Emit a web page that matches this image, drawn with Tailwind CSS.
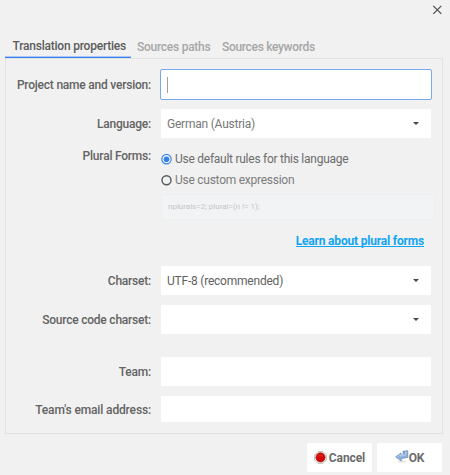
<!DOCTYPE html>
<html lang="en">
<head>
<meta charset="utf-8">
<title>Translation properties</title>
<script src="https://cdn.jsdelivr.net/npm/@tailwindcss/browser@4"></script>
</head>
<body class="w-[450px] h-[475px] overflow-hidden bg-[#f1f1f1] font-['Roboto',sans-serif] text-[12px] tracking-[-0.22px] leading-4 text-[#636363]">
<div class="flex flex-col h-[475px] pl-[5px] pr-[8px]">
  <header class="flex justify-end h-[37px] pt-[5px]">
    <button class="size-[10px]" aria-label="Close"><svg class="block" width="10" height="10" viewBox="0 0 10 10" fill="none" stroke="#4c4c4c" stroke-width="1.2"><path d="M1.3 .8l8 8M9.3 .8l-8 8"/></svg></button>
  </header>
  <nav class="relative z-10 flex h-[21px] font-medium whitespace-nowrap">
    <div class="w-[126px] h-[21px] pl-[7.5px] pt-px border-b border-[#3a80f2] shadow-[inset_0_-1px_0_#a9c7f6] text-[#5b5b5b]">Translation properties</div>
    <div class="w-[85px] pl-[6px] pt-[2px] text-[#a6a6a6] tracking-[-0.26px]">Sources paths</div>
    <div class="pl-[6px] pt-[2px] text-[#a6a6a6] tracking-[-0.32px]">Sources keywords</div>
  </nav>
  <main class="flex flex-col w-[438px] h-[376px] border border-[#e2e2e2] pt-[10px] pr-[10px]">
    <div class="flex items-center h-[31px]">
      <label class="w-[145px] font-medium text-right">Project name and version:</label>
      <div class="flex items-center ml-[9px] w-[272px] h-[31px] rounded-[2px] border border-[#7ba7f2] bg-white pl-[6px]"><span class="w-px h-4 bg-[#a0a0a0]"></span></div>
    </div>
    <div class="flex items-center h-[29px] mt-[9px]">
      <label class="w-[145px] font-medium text-right">Language:</label>
      <div class="flex items-center justify-between ml-[10px] w-[270px] h-[29px] rounded-[1px] bg-white pl-[6px] pr-[12px] text-[#777]">German (Austria)<svg width="6" height="3" viewBox="0 0 6 3" fill="#3f474d"><path d="M0 0h6L3 3z"/></svg></div>
    </div>
    <div class="flex mt-[9px] h-[48px]">
      <label class="w-[145px] pt-px font-medium text-right">Plural Forms:</label>
      <div class="ml-[10px] pt-[4px] text-[#6d6d6d] tracking-[-0.26px]">
        <div class="flex items-center h-4"><svg width="11" height="11" viewBox="0 0 11 11"><circle cx="5.5" cy="5.2" r="4.7" fill="#f5f8fe" stroke="#3481ee" stroke-width="1.2"/><circle cx="5.5" cy="5.2" r="2.8" fill="#3481ee"/></svg><span class="ml-[3px]">Use default rules for this language</span></div>
        <div class="flex items-center h-4 mt-[5px] text-[#7c7c7c]"><svg width="11" height="11" viewBox="0 0 11 11"><circle cx="5.5" cy="5.2" r="4.5" fill="none" stroke="#535a5f" stroke-width="1.4"/></svg><span class="ml-[3px]">Use custom expression</span></div>
      </div>
    </div>
    <div class="flex items-center ml-[155px] w-[274px] h-[26px] -mt-px border border-[#eeeff1] bg-[#f2f3f5] pl-[6px] text-[8px] tracking-normal text-[#c3c5c8]">nplurals=2; plural=(n != 1);</div>
    <div class="flex justify-end mt-[13px] h-[33px] pr-[8px]"><a class="h-[14px] font-bold text-[#12a5f4] border-b border-[#12a5f4] tracking-[-0.18px]">Learn about plural forms</a></div>
    <div class="flex items-center h-[29px]">
      <label class="w-[145px] font-medium text-right">Charset:</label>
      <div class="flex items-center justify-between ml-[10px] w-[270px] h-[29px] rounded-[1px] bg-white pl-[6px] pr-[12px] text-[#5f5f5f]">UTF-8 (recommended)<svg width="6" height="3" viewBox="0 0 6 3" fill="#3f474d"><path d="M0 0h6L3 3z"/></svg></div>
    </div>
    <div class="flex items-center h-[29px] mt-[10px]">
      <label class="w-[145px] font-medium text-right">Source code charset:</label>
      <div class="flex items-center justify-end ml-[10px] w-[270px] h-[29px] rounded-[1px] bg-white pr-[12px]"><svg width="6" height="3" viewBox="0 0 6 3" fill="#3f474d"><path d="M0 0h6L3 3z"/></svg></div>
    </div>
    <div class="flex items-center h-[29px] mt-[23px]">
      <label class="w-[145px] font-medium text-right">Team:</label>
      <div class="ml-[10px] w-[270px] h-[29px] rounded-[1px] bg-white"></div>
    </div>
    <div class="flex items-center h-[26px] mt-[10px]">
      <label class="w-[145px] pt-px font-medium text-right tracking-[-0.14px]">Team's email address:</label>
      <div class="ml-[10px] w-[270px] h-[26px] rounded-[1px] bg-white"></div>
    </div>
  </main>
  <footer class="flex justify-end gap-[5px] mt-[9px] font-bold text-[#6b6b6b]">
    <button class="flex items-center justify-center w-[65px] h-[29px] rounded-[1px] bg-white"><svg width="13" height="13" viewBox="0 0 13 13"><path d="M4 .5h5L12.5 4v5L9 12.5H4L.5 9V4z" fill="#e8e8e4" stroke="#b5b5b0" stroke-width=".7"/><circle cx="6.5" cy="6.4" r="4.6" fill="#d00a0a" stroke="#a80000" stroke-width=".5"/><path d="M3.2 5.5a3.4 3.4 0 0 1 6.6 0" fill="#dc2018"/></svg><span class="ml-[2px] tracking-[-0.1px]">Cancel</span></button>
    <button class="flex items-center justify-center w-[65px] h-[29px] rounded-[1px] bg-white"><svg class="-mt-[2px]" width="14" height="13" viewBox="0 0 14 13"><ellipse cx="7" cy="11.5" rx="4.5" ry="1" fill="#e4e4e4"/><path d="M8 1.2L12.8.7V7.4L6.2 8.5V11L.7 6.8 6 3v2.2l3.6-.4V3.7H8z" fill="#8fb2db" stroke="#6185b3" stroke-width=".7"/><path d="M2.2 6.7L5.4 4.5V6l5-.6V2.4l1.6-.4" fill="none" stroke="#bcd4ee" stroke-width=".8"/></svg><span>OK</span></button>
  </footer>
</div>
</body>
</html>
